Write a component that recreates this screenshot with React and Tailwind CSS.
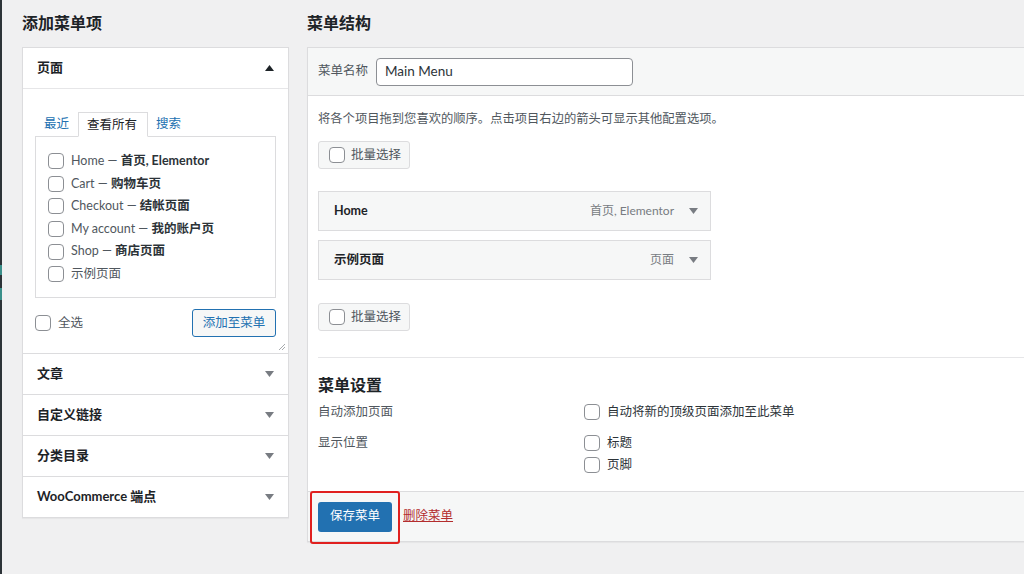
import React from 'react';

const font = "font-['Lato','Noto_Sans_CJK_SC',sans-serif]";

function Box({ className = '' }) {
    return <span className={`inline-block w-[16px] h-[16px] border border-[#8c8f94] rounded-[4px] bg-white shrink-0 ${className}`} />;
}

function Caret({ up = false, color = '#1d2327' }) {
    return (
        <svg width="9" height="6" viewBox="0 0 9 6" className="shrink-0">
            {up ? <polygon points="0,6 9,6 4.5,0" fill={color} /> : <polygon points="0,0 9,0 4.5,6" fill={color} />}
        </svg>
    );
}

const pages = [
    ['Home', '首页, Elementor'],
    ['Cart', '购物车页'],
    ['Checkout', '结帐页面'],
    ['My account', '我的账户页'],
    ['Shop', '商店页面'],
];

const sections = ['文章', '自定义链接', '分类目录', 'WooCommerce 端点'];

function BulkButton() {
    return (
        <div className="w-[92px] h-[28px] flex items-center gap-[6px] pl-[10px] bg-[#f6f7f7] border border-[#dcdcde] rounded-[3px] text-[12.5px] text-[#50575e]">
            <Box />
            <span>批量选择</span>
        </div>
    );
}

function MenuItem({ title, type }) {
    return (
        <div className="w-[393px] h-[40px] flex items-center pl-[15px] pr-[12px] bg-[#f6f7f7] border border-[#dcdcde]">
            <span className="text-[12.5px] font-bold text-[#1d2327] flex-1">{title}</span>
            <span className="text-[12px] text-[#787c82] mr-[15px]">{type}</span>
            <Caret color="#787c82" />
        </div>
    );
}

export default function App() {
    return (
        <div className={`w-[1024px] h-[574px] overflow-hidden bg-[#f0f0f1] flex ${font}`}>
            {/* admin sidebar edge */}
            <div className="w-[2px] h-full bg-[#2c3338] flex flex-col">
                <div className="h-[265px]" />
                <div className="h-[10px] bg-[#3a8f8a]" />
                <div className="h-[13px]" />
                <div className="h-[12px] bg-[#3a8f8a]" />
            </div>

            <div className="flex-1 flex pl-[20px] gap-[18px] overflow-hidden">
                {/* left column */}
                <div className="w-[267px] shrink-0">
                    <div className="h-[47px] flex items-center pb-[2px] text-[16px] font-bold text-[#1d2327]">添加菜单项</div>
                    <div className="bg-white border border-[#dcdcde] shadow-[0_1px_1px_rgba(0,0,0,0.04)]">
                        <div className="h-[41px] flex items-center justify-between pl-[14px] pr-[14px] border-b border-[#e6e6e8]">
                            <span className="text-[13px] font-bold text-[#1d2327]">页面</span>
                            <Caret up />
                        </div>
                        <div className="relative pl-[12px] pr-[12px] pt-[22px] pb-[16px]">
                            <div className="flex items-end h-[25px] text-[12.5px] pl-[9px]">
                                <span className="text-[#2271b1] pb-[2px]">最近</span>
                                <span className="ml-[9px] h-[25px] px-[8px] pr-[10px] pt-[2px] flex items-center bg-white border border-[#dcdcde] border-b-white mb-[-1px] relative z-10 text-[#1d2327]">查看所有</span>
                                <span className="ml-[8px] text-[#2271b1] pb-[2px]">搜索</span>
                            </div>
                            <div className="border border-[#dcdcde] pt-[13px] pb-[12px] pl-[12px] h-[162px]">
                                {pages.map(([en, zh]) => (
                                    <div key={en} className="h-[22.6px] flex items-center gap-[7px] text-[12.5px] text-[#50575e]">
                                        <Box />
                                        <span>{en} — <b className="text-[#2c3338]">{zh}</b></span>
                                    </div>
                                ))}
                                <div className="h-[22.6px] flex items-center gap-[7px] text-[12.5px] text-[#50575e]">
                                    <Box />
                                    <span>示例页面</span>
                                </div>
                            </div>
                            <div className="flex items-center justify-between mt-[11px]">
                                <div className="flex items-center gap-[7px] text-[12.5px] text-[#50575e]">
                                    <Box />
                                    <span>全选</span>
                                </div>
                                <div className="w-[84px] h-[28px] flex items-center justify-center border border-[#2271b1] rounded-[3px] bg-[#f6f7f7] text-[12.5px] text-[#2271b1]">添加至菜单</div>
                            </div>
                            <svg width="8" height="8" viewBox="0 0 8 8" className="absolute right-[2px] bottom-[2px]">
                                <line x1="1" y1="7" x2="7" y2="1" stroke="#a7aaad" strokeWidth="1" />
                                <line x1="4" y1="7" x2="7" y2="4" stroke="#a7aaad" strokeWidth="1" />
                            </svg>
                        </div>
                        {sections.map((s) => (
                            <div key={s} className="h-[41px] flex items-center justify-between pl-[14px] pr-[14px] border-t border-[#dcdcde]">
                                <span className="text-[13px] font-bold text-[#1d2327]">{s}</span>
                                <Caret color="#787c82" />
                            </div>
                        ))}
                    </div>
                </div>

                {/* right column */}
                <div className="flex-1 min-w-0">
                    <div className="h-[47px] flex items-center pb-[2px] text-[16px] font-bold text-[#1d2327]">菜单结构</div>
                    <div className="w-[760px] bg-white border border-[#dcdcde] shadow-[0_1px_1px_rgba(0,0,0,0.04)]">
                        <div className="h-[48px] flex items-center gap-[8px] pl-[10px] bg-[#f6f7f7] border-b border-[#dcdcde]">
                            <span className="text-[12.5px] text-[#50575e]">菜单名称</span>
                            <div className="w-[257px] h-[28px] flex items-center px-[8px] border border-[#8c8f94] rounded-[4px] bg-white text-[13.5px] text-[#2c3338]">Main Menu</div>
                        </div>
                        <div className="pl-[10px] pt-[14px]">
                            <p className="text-[12.3px] leading-[18px] text-[#50575e]">将各个项目拖到您喜欢的顺序。点击项目右边的箭头可显示其他配置选项。</p>
                            <div className="mt-[13px]"><BulkButton /></div>
                            <div className="mt-[22px] flex flex-col gap-[9px]">
                                <MenuItem title="Home" type="首页, Elementor" />
                                <MenuItem title="示例页面" type="页面" />
                            </div>
                            <div className="mt-[23px]"><BulkButton /></div>
                            <div className="mt-[26px] border-t border-[#e6e6e8] pt-[16px] pb-[16px]">
                                <div className="text-[16px] font-bold text-[#1d2327] leading-[22px]">菜单设置</div>
                                <div className="flex mt-[6px] text-[12.5px] text-[#50575e]">
                                    <div className="w-[266px] leading-[20px]">自动添加页面</div>
                                    <div className="flex items-center gap-[7px] h-[20px]">
                                        <Box />
                                        <span className="text-[#2c3338]">自动将新的顶级页面添加至此菜单</span>
                                    </div>
                                </div>
                                <div className="flex mt-[11px] text-[12.5px] text-[#50575e]">
                                    <div className="w-[266px] leading-[20px]">显示位置</div>
                                    <div className="flex flex-col gap-[2px]">
                                        <div className="flex items-center gap-[7px] h-[20px]">
                                            <Box />
                                            <span className="text-[#2c3338]">标题</span>
                                        </div>
                                        <div className="flex items-center gap-[7px] h-[20px]">
                                            <Box />
                                            <span className="text-[#2c3338]">页脚</span>
                                        </div>
                                    </div>
                                </div>
                            </div>
                        </div>
                        <div className="relative h-[50px] flex items-center gap-[11px] pl-[10px] bg-[#f6f7f7] border-t border-[#dcdcde]">
                            <div className="w-[74px] h-[30px] flex items-center justify-center rounded-[3px] bg-[#2271b1] text-white text-[12.5px]">保存菜单</div>
                            <span className="text-[12.5px] text-[#b32d2e] underline">删除菜单</span>
                            <div className="absolute left-[2px] top-[-1px] w-[90px] h-[53px] border-2 border-[#e0201f] rounded-[3px]" />
                        </div>
                    </div>
                </div>
            </div>
        </div>
    );
}
